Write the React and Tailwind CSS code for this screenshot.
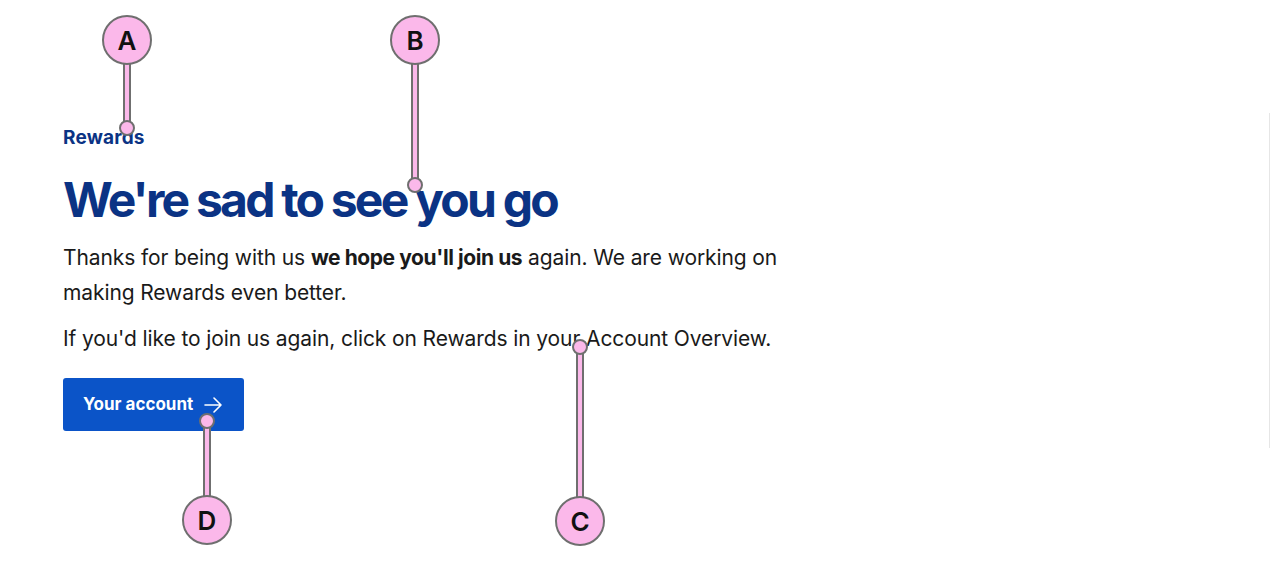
import React from 'react';

const CALLOUTS = [
  { label: 'A', x: 127, circleY: 40, dotY: 128 },
  { label: 'B', x: 415, circleY: 40, dotY: 185 },
  { label: 'C', x: 580, circleY: 521, dotY: 347 },
  { label: 'D', x: 207, circleY: 520, dotY: 421 },
];

function Callout({ label, x, circleY, dotY }) {
  const top = Math.min(circleY, dotY);
  const height = Math.abs(circleY - dotY);
  return (
    <>
      <div
        className="absolute w-[8px] -ml-[4px] bg-[#fbb8ea] border-x-2 border-[#6f6f6f]"
        style={{ left: x, top, height }}
      />
      <div
        className="absolute w-[16px] h-[16px] -ml-[8px] -mt-[8px] rounded-full bg-[#fbb8ea] border-2 border-[#6f6f6f]"
        style={{ left: x, top: dotY }}
      />
      <div
        className="absolute w-[50px] h-[50px] -ml-[25px] -mt-[25px] rounded-full bg-[#fbb8ea] border-2 border-[#6f6f6f] flex items-center justify-center text-[26px] font-semibold text-[#111] font-['Inter',sans-serif]"
        style={{ left: x, top: circleY }}
      >
        {label}
      </div>
    </>
  );
}

export default function App() {
  return (
    <div className="relative w-[1280px] h-[563px] bg-white overflow-hidden font-['Inter',sans-serif]">
      <div className="flex">
        <main className="flex-1 pl-[63px] pt-[124px]">
          <p className="text-[19px] leading-[28px] font-bold text-[#0b3384] tracking-[0.01em]">Rewards</p>
          <h1 className="mt-[20px] text-[48px] leading-[56px] font-bold text-[#0b3384] tracking-[-0.058em]">
            We're sad to see you go
          </h1>
          <div className="mt-[12px] max-w-[750px] text-[21px] leading-[35px] text-[#1a1a1a] tracking-[-0.005em]">
            <p>
              Thanks for being with us <strong className="font-bold tracking-[-0.02em]">we hope you'll join us</strong> again. We are working on making Rewards even better.
            </p>
            <p className="mt-[11px]">If you'd like to join us again, click on Rewards in your Account Overview.</p>
          </div>
          <button className="mt-[22px] h-[53px] w-[181px] rounded-[3px] bg-[#0b54c8] text-white text-[17px] font-bold tracking-[0em] flex items-center pl-[20px] gap-[11px]">
            Your account
            <svg width="18" height="16" viewBox="0 0 18 16" fill="none" stroke="currentColor" strokeWidth="1.6" strokeLinecap="round" strokeLinejoin="round">
              <path d="M1 8H17M10 1L17 8L10 15" />
            </svg>
          </button>
        </main>
        <div className="mt-[113px] mr-[10px] w-px h-[335px] bg-[#e6e6e6]" />
      </div>
      {CALLOUTS.map((c) => (
        <Callout key={c.label} {...c} />
      ))}
    </div>
  );
}
